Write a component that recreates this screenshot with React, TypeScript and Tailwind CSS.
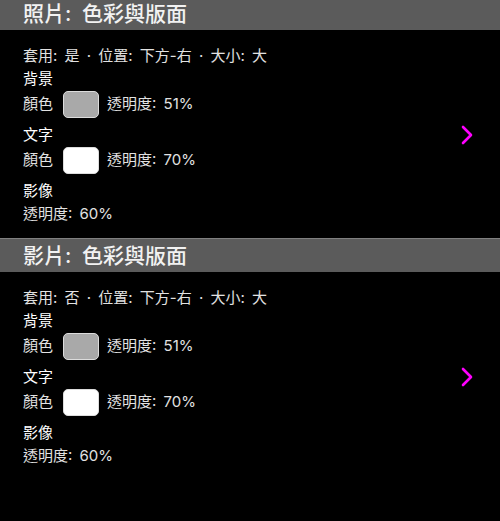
const font = { fontFamily: 'Inter, "Noto Sans CJK TC", sans-serif' };

type Swatch = { label: string; color: string; opacity: string };

type Section = {
  title: string;
  summary: string;
  background: Swatch;
  text: Swatch;
  imageOpacity: string;
};

const sections: Section[] = [
  {
    title: '照片: 色彩與版面',
    summary: '套用: 是 · 位置: 下方-右 · 大小: 大',
    background: { label: '背景', color: 'bg-[#a9a9a9]', opacity: '51%' },
    text: { label: '文字', color: 'bg-white', opacity: '70%' },
    imageOpacity: '60%',
  },
  {
    title: '影片: 色彩與版面',
    summary: '套用: 否 · 位置: 下方-右 · 大小: 大',
    background: { label: '背景', color: 'bg-[#a9a9a9]', opacity: '51%' },
    text: { label: '文字', color: 'bg-white', opacity: '70%' },
    imageOpacity: '60%',
  },
];

const Chevron = () => (
  <svg width="14" height="20" viewBox="0 0 14 20" className="shrink-0">
    <polyline
      points="3,2 11,10 3,18"
      fill="none"
      stroke="#ff00ff"
      strokeWidth="2.6"
      strokeLinecap="round"
      strokeLinejoin="round"
    />
  </svg>
);

const ColorGroup = ({ item }: { item: Swatch }) => (
  <div>
    <div className="h-[23px] leading-[23px] text-white">{item.label}</div>
    <div className="flex items-center h-[29px]">
      <span>顏色</span>
      <span
        className={`ml-[10px] w-[36px] h-[27px] rounded-[5px] border-[1.5px] border-[#dcdcdc] ${item.color}`}
      />
      <span className="ml-[8px]">透明度: {item.opacity}</span>
    </div>
  </div>
);

const SectionBlock = ({ s, first }: { s: Section; first: boolean }) => (
  <div>
    {/* Section header */}
    <div
      className={`h-[34px] bg-[#5b5b5b] border-t border-[#808080] flex items-center px-[23px] text-[21px] font-medium text-[#f2f2f2] [word-spacing:5px] ${
        first ? '-mt-[4px]' : ''
      }`}
    >
      {s.title}
    </div>

    {/* Section content */}
    <div className="flex items-center pl-[23px] pr-[26px] pt-[14px] pb-[13px]">
      <div className="flex-1 text-[15px] text-[#e2e2e2] [word-spacing:3px]">
        <div className="h-[23px] leading-[23px]">{s.summary}</div>
        <ColorGroup item={s.background} />
        <div className="mt-[4px]">
          <ColorGroup item={s.text} />
        </div>
        <div className="mt-[4px]">
          <div className="h-[23px] leading-[23px] text-white">影像</div>
          <div className="h-[23px] leading-[23px]">透明度: {s.imageOpacity}</div>
        </div>
      </div>
      <Chevron />
    </div>
  </div>
);

export default function App() {
  return (
    <div className="w-[500px] h-[521px] bg-black overflow-hidden" style={font}>
      {sections.map((s, i) => (
        <SectionBlock key={s.title} s={s} first={i === 0} />
      ))}
    </div>
  );
}
